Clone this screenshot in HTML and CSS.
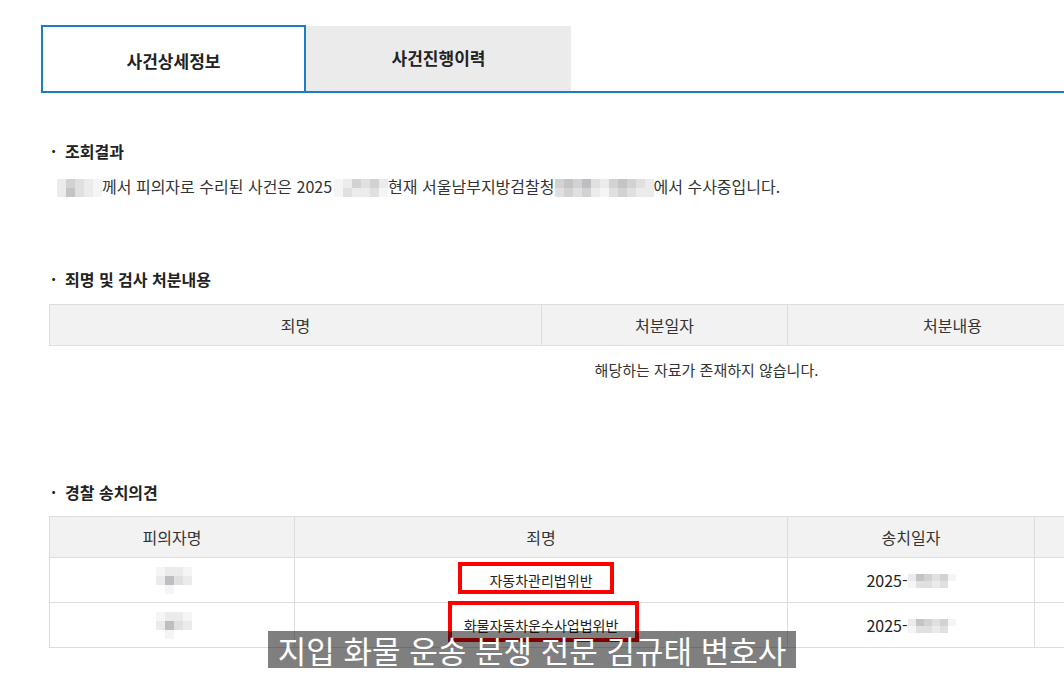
FILE: index.html
```html
<!DOCTYPE html>
<html lang="ko">
<head>
  <meta charset="UTF-8">
  <meta name="viewport" content="width=device-width, initial-scale=1.0">
  <title>사건상세정보</title>
  <link rel="stylesheet" href="styles.css">
</head>
<body>
  <div class="page">
    <div class="tabs">
      <div class="tab active">사건상세정보</div>
      <div class="tab">사건진행이력</div>
    </div>

    <div class="content">
      <h3 class="sec-title first"><span class="dot">·</span>조회결과</h3>
      <p class="result">
        <span class="mosaic m5">
          <i class="s1"></i><i class="s3"></i><i class="s2"></i><i class="s1"></i><i class="s0"></i>
          <i class="s1"></i><i class="s4"></i><i class="s2"></i><i class="s1"></i><i class="s0"></i>
        </span>께서 피의자로 수리된 사건은 2025<span class="mosaic m6">
          <i class="s0"></i><i class="s1"></i><i class="s3"></i><i class="s2"></i><i class="s3"></i><i class="s1"></i>
          <i class="s0"></i><i class="s2"></i><i class="s1"></i><i class="s1"></i><i class="s2"></i><i class="s0"></i>
        </span>현재 서울남부지방검찰청<span class="mosaic m11">
          <i class="s3"></i><i class="s4"></i><i class="s3"></i><i class="s5"></i><i class="s2"></i><i class="s1"></i><i class="s3"></i><i class="s4"></i><i class="s3"></i><i class="s2"></i><i class="s1"></i>
          <i class="s2"></i><i class="s3"></i><i class="s2"></i><i class="s3"></i><i class="s1"></i><i class="s0"></i><i class="s2"></i><i class="s3"></i><i class="s2"></i><i class="s1"></i><i class="s1"></i>
        </span>에서 수사중입니다.
      </p>

      <h3 class="sec-title second"><span class="dot">·</span>죄명 및 검사 처분내용</h3>
      <table class="grid">
        <colgroup>
          <col class="w492"><col class="w246"><col class="w330"><col class="w246">
        </colgroup>
        <thead>
          <tr>
            <th>죄명</th>
            <th>처분일자</th>
            <th>처분내용</th>
            <th></th>
          </tr>
        </thead>
        <tbody>
          <tr class="empty-row">
            <td colspan="4">해당하는 자료가 존재하지 않습니다.</td>
          </tr>
        </tbody>
      </table>

      <h3 class="sec-title third"><span class="dot">·</span>경찰 송치의견</h3>
      <table class="grid tight">
        <colgroup>
          <col class="w245"><col class="w493"><col class="w247"><col class="w329">
        </colgroup>
        <thead>
          <tr>
            <th>피의자명</th>
            <th>죄명</th>
            <th>송치일자</th>
            <th></th>
          </tr>
        </thead>
        <tbody>
          <tr class="data-row">
            <td>
              <span class="mosaic name">
                <i class="s0"></i><i class="s1"></i><i class="s1"></i><i class="s0"></i>
                <i class="s1"></i><i class="s5"></i><i class="s2"></i><i class="s1"></i>
                <i class="s9"></i><i class="s0"></i><i class="s9"></i><i class="s9"></i>
              </span>
            </td>
            <td class="crime">자동차관리법위반</td>
            <td class="date">2025-<span class="mosaic date-blur">
                <i class="s1"></i><i class="s4"></i><i class="s3"></i><i class="s2"></i><i class="s3"></i><i class="s0"></i>
                <i class="s0"></i><i class="s2"></i><i class="s2"></i><i class="s1"></i><i class="s2"></i><i class="s9"></i>
              </span></td>
            <td></td>
          </tr>
          <tr class="data-row">
            <td>
              <span class="mosaic name">
                <i class="s0"></i><i class="s1"></i><i class="s1"></i><i class="s0"></i>
                <i class="s1"></i><i class="s5"></i><i class="s2"></i><i class="s1"></i>
                <i class="s9"></i><i class="s0"></i><i class="s9"></i><i class="s9"></i>
              </span>
            </td>
            <td class="crime">화물자동차운수사업법위반</td>
            <td class="date">2025-<span class="mosaic date-blur">
                <i class="s1"></i><i class="s4"></i><i class="s3"></i><i class="s2"></i><i class="s3"></i><i class="s0"></i>
                <i class="s0"></i><i class="s2"></i><i class="s2"></i><i class="s1"></i><i class="s2"></i><i class="s9"></i>
              </span></td>
            <td></td>
          </tr>
        </tbody>
      </table>
    </div>

    <!-- annotations drawn over the screenshot -->
    <div class="mark mark-1"></div>
    <div class="mark mark-2"></div>
    <div class="caption">지입 화물 운송 분쟁 전문 김규태 변호사</div>
  </div>
</body>
</html>
```

FILE: styles.css
```css
html, body {
  margin: 0;
  overflow: hidden;
}
body {
  font-family: "Noto Sans CJK KR", "Noto Sans", sans-serif;
  color: #333;
  background: #fff;
}
.page {
  position: relative;
  width: 1400px;
  height: 675px;
  padding: 25px 0 0 41px;
  box-sizing: border-box;
}

/* tabs */
.tabs {
  display: flex;
  height: 66px;
  border-bottom: 2px solid #1a7ec4;
  width: 1359px;
}
.tab {
  width: 265px;
  box-sizing: border-box;
  display: flex;
  align-items: center;
  justify-content: center;
  font-size: 17px;
  font-weight: 700;
  color: #222;
  background-color: #ebebeb;
  margin-top: 1px;
  padding-bottom: 2px;
}
.tab.active {
  background-color: #fff;
  border: 2px solid #1a7ec4;
  border-bottom: none;
  margin-top: 0;
  padding-bottom: 0;
  padding-top: 2px;
}

/* sections */
.content {
  padding-left: 8px;
}
.sec-title {
  margin: 0;
  font-size: 16px;
  font-weight: 700;
  line-height: 20px;
  color: #222;
}
.sec-title .dot {
  display: inline-block;
  width: 16px;
  padding-left: 2px;
  box-sizing: border-box;
}
.sec-title.first {
  margin-top: 48px;
}
.sec-title.second {
  margin-top: 72px;
}
.sec-title.third {
  margin-top: 88px;
}
.result {
  margin: 15px 0 0 8px;
  font-size: 16px;
  line-height: 20px;
  color: #333;
}

/* tables */
.grid {
  width: 1314px;
  border-collapse: collapse;
  table-layout: fixed;
  margin-top: 15px;
}
.grid.tight {
  margin-top: 14px;
}
.w492 { width: 492px; }
.w246 { width: 246px; }
.w330 { width: 330px; }
.w245 { width: 245px; }
.w493 { width: 493px; }
.w247 { width: 247px; }
.w329 { width: 329px; }
.grid th, .grid td {
  border: 1px solid #ddd;
  text-align: center;
  padding: 0;
}
.grid th {
  height: 40px;
  background-color: #f2f2f2;
  font-size: 16px;
  font-weight: 400;
  color: #333;
}
.grid .empty-row td {
  height: 48px;
  border: none;
  border-top: 1px solid #ddd;
  font-size: 15px;
  color: #333;
}
.data-row td {
  height: 44px;
}
.crime {
  font-size: 14px;
  color: #222;
}
.date {
  font-size: 16px;
  color: #222;
}

/* pixelated (masked) text */
.mosaic {
  display: inline-grid;
  vertical-align: middle;
  grid-auto-rows: 9px;
}
.mosaic i {
  display: block;
}
.m5 { grid-template-columns: repeat(5, 9px); margin-top: -2px; }
.m6 { grid-template-columns: repeat(6, 9px); margin: -2px 0 0 2px; }
.m11 { grid-template-columns: repeat(11, 9px); margin-top: -2px; }
.name { grid-template-columns: repeat(4, 9px); margin-left: 4px; }
.date-blur {
  grid-template-columns: repeat(6, 8px);
  grid-auto-rows: 7px;
  margin-top: -2px;
}
.s9 { background-color: #fff; }
.s0 { background-color: #f5f5f5; }
.s1 { background-color: #ebebeb; }
.s2 { background-color: #e0e0e0; }
.s3 { background-color: #d2d2d2; }
.s4 { background-color: #c4c4c4; }
.s5 { background-color: #bdbdc2; }

/* annotations */
.mark {
  position: absolute;
  border: 4px solid #ff0000;
  box-sizing: border-box;
}
.mark-1 {
  left: 458px;
  top: 562px;
  width: 156px;
  height: 32px;
}
.mark-2 {
  left: 448px;
  top: 601px;
  width: 191px;
  height: 41px;
}
.caption {
  position: absolute;
  left: 268px;
  top: 631px;
  width: 528px;
  height: 37px;
  background-color: rgba(0, 0, 0, 0.5);
  color: #fff;
  font-size: 31px;
  line-height: 37px;
  text-align: center;
}
```
